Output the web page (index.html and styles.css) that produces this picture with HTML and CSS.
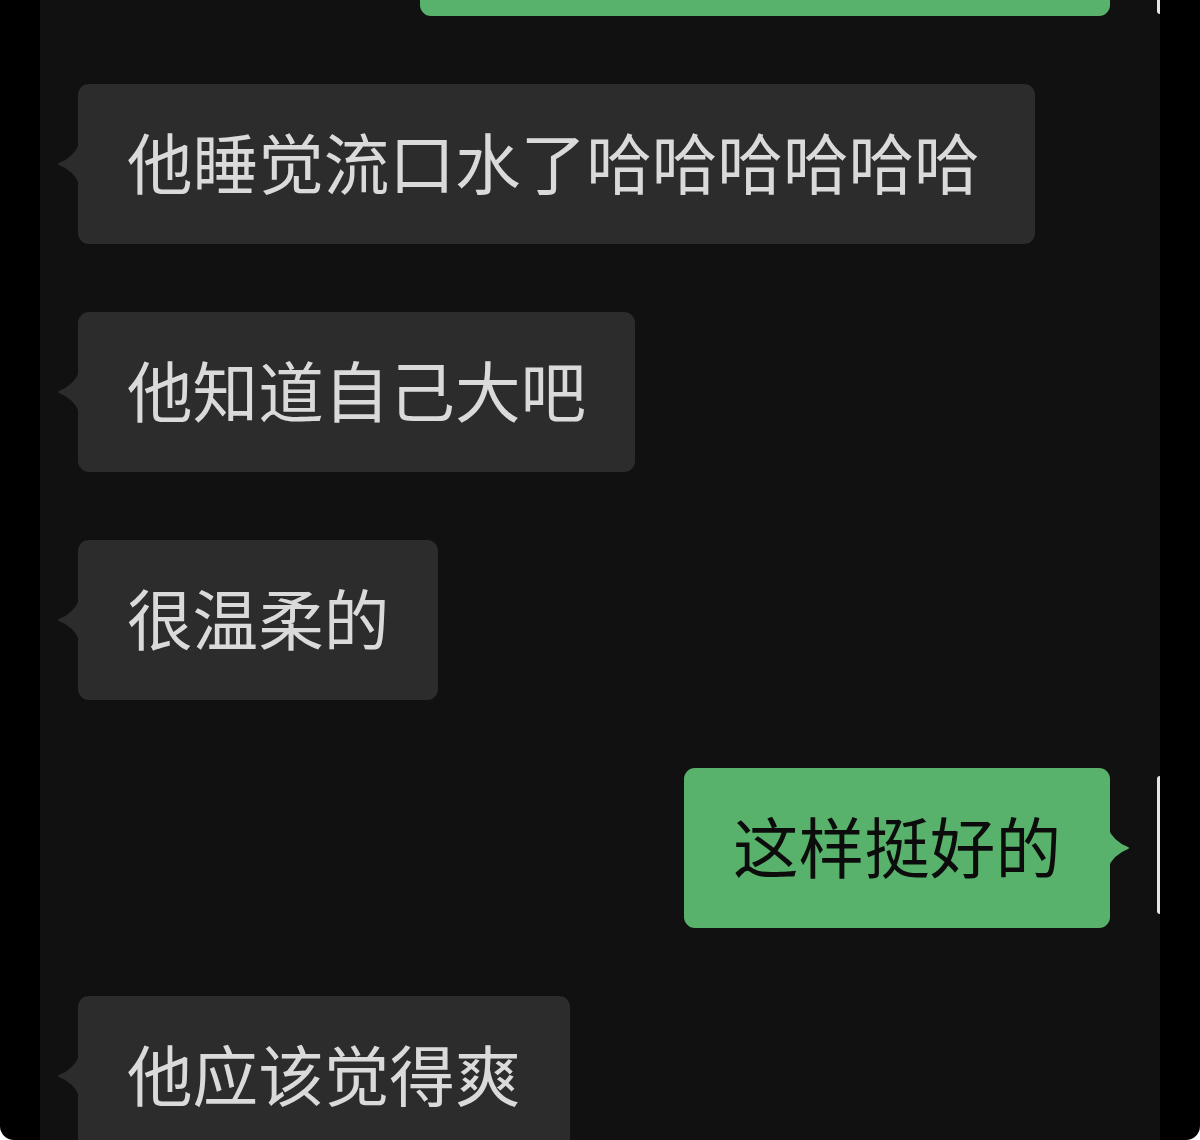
FILE: index.html
```html
<!DOCTYPE html>
<html lang="zh-CN">
<head>
<meta charset="utf-8">
<title>Chat</title>
<link rel="stylesheet" href="styles.css">
</head>
<body>
<div class="frame">
  <div class="panel">
    <div class="chat">
      <div class="row row-right">
        <div class="bubble bubble-green bubble-top"></div>
        <span class="avatar-edge avatar-edge-top"></span>
      </div>
      <div class="row row-left">
        <div class="bubble bubble-gray bubble-wide">他睡觉流口水了哈哈哈哈哈哈</div>
      </div>
      <div class="row row-left">
        <div class="bubble bubble-gray">他知道自己大吧</div>
      </div>
      <div class="row row-left">
        <div class="bubble bubble-gray">很温柔的</div>
      </div>
      <div class="row row-right">
        <div class="bubble bubble-green">这样挺好的</div>
        <span class="avatar-edge"></span>
      </div>
      <div class="row row-left">
        <div class="bubble bubble-gray">他应该觉得爽</div>
      </div>
    </div>
  </div>
</div>
</body>
</html>
```

FILE: styles.css
```css
html {
  background: #ffffff;
}
body {
  margin: 0;
  background: #000000;
  border-radius: 0 0 14px 14px;
  overflow: hidden;
  font-family: "Noto Sans CJK SC", "Noto Sans", sans-serif;
}
.frame {
  width: 1200px;
  height: 1140px;
  padding-left: 40px;
  box-sizing: border-box;
}
.panel {
  width: 1120px;
  height: 1140px;
  background: #111111;
  overflow: hidden;
  position: relative;
}
.chat {
  display: flex;
  flex-direction: column;
  gap: 68px;
  margin-top: -144px;
}
.row {
  display: flex;
  position: relative;
}
.row-left {
  justify-content: flex-start;
  padding-left: 38px;
}
.row-right {
  justify-content: flex-end;
  padding-right: 50px;
}
.bubble {
  position: relative;
  font-size: 65.6px;
  line-height: 66px;
  padding: 44px 49px 50px;
  border-radius: 11px;
  white-space: nowrap;
  letter-spacing: 0;
}
.bubble-wide {
  padding-right: 55px;
}
.bubble-gray {
  background: #2c2c2c;
  color: #dadada;
}
.bubble-green {
  background: #58b26b;
  color: #0c0c0c;
}
.bubble-top {
  width: 592px;
  height: 66px;
}
.bubble-gray::before {
  content: "";
  position: absolute;
  left: -21px;
  top: 50%;
  width: 22px;
  height: 40px;
  margin-top: -20px;
  background: #2c2c2c;
  clip-path: path("M22 0 Q17 13 2 19 Q0 20 2 21 Q17 27 22 40 Z");
}
.bubble-green::after {
  content: "";
  position: absolute;
  right: -20px;
  top: 50%;
  width: 22px;
  height: 40px;
  margin-top: -20px;
  background: #58b26b;
  clip-path: path("M0 0 Q5 13 20 19 Q22 20 20 21 Q5 27 0 40 Z");
}
.avatar-edge {
  position: absolute;
  right: 0;
  top: 8px;
  width: 3px;
  height: 138px;
  background: #e8e4df;
  border-radius: 3px 0 0 3px;
}
.avatar-edge-top {
  top: 0;
  height: 158px;
}
```
